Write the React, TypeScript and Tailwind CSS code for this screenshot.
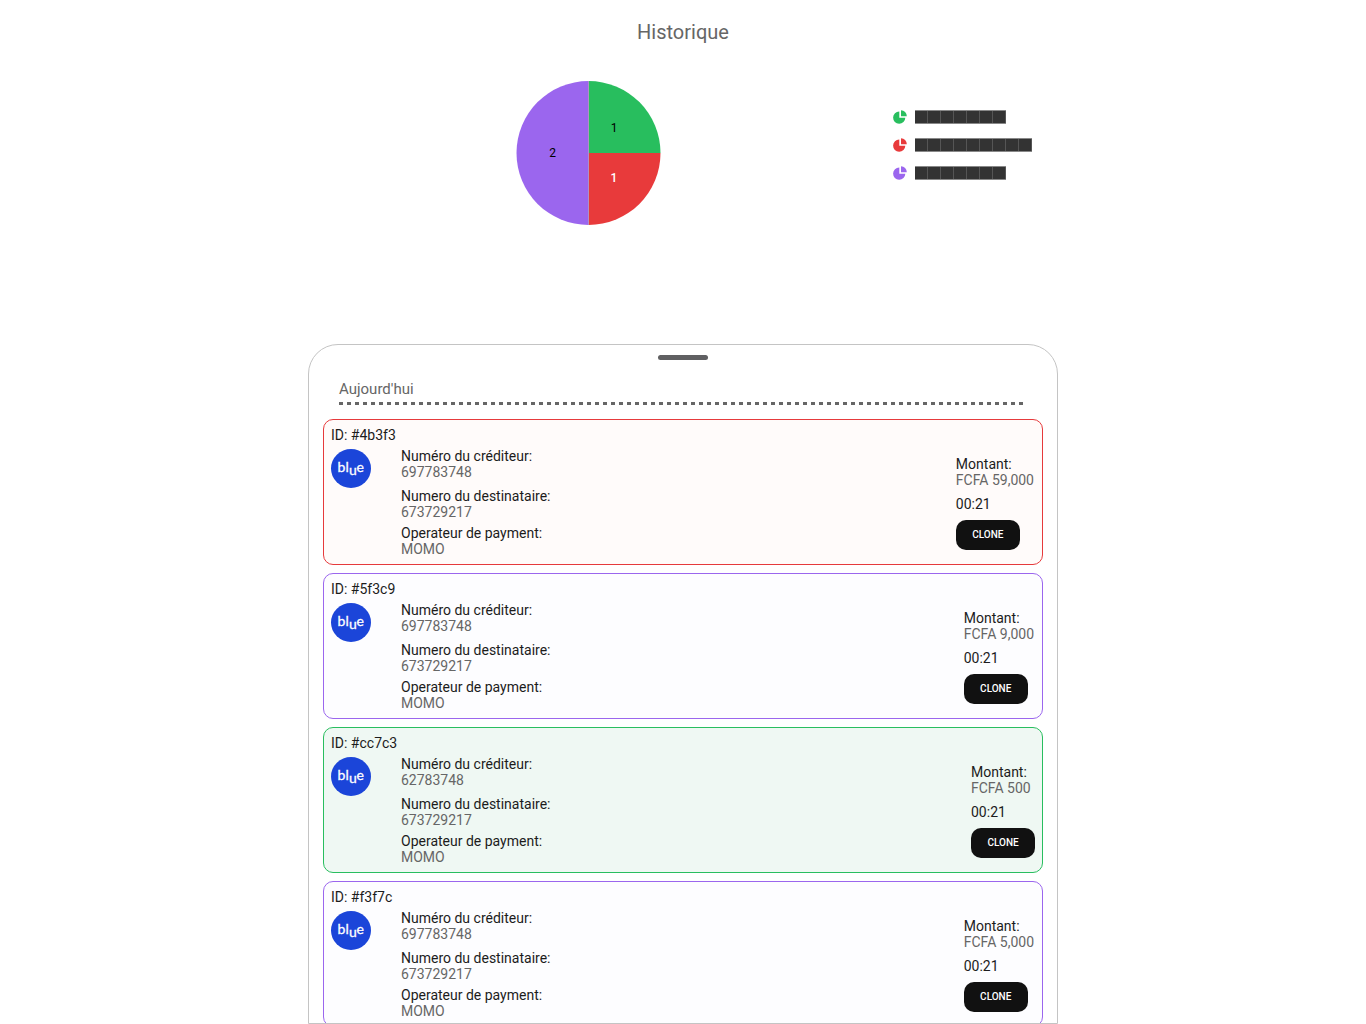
type Transaction = {
  id: string;
  creditor: string;
  amount: string;
  tone: string;
};

const transactions: Transaction[] = [
  { id: "#4b3f3", creditor: "697783748", amount: "FCFA 59,000", tone: "border-[#e63a3c] bg-[#fffbfa]" },
  { id: "#5f3c9", creditor: "697783748", amount: "FCFA 9,000", tone: "border-[#9b66ee] bg-[#fdfdff]" },
  { id: "#cc7c3", creditor: "62783748", amount: "FCFA 500", tone: "border-[#29be5f] bg-[#eff8f3]" },
  { id: "#f3f7c", creditor: "697783748", amount: "FCFA 5,000", tone: "border-[#9b66ee] bg-[#fdfdff]" },
];

const legend = [
  { color: "text-[#28be5e]", blocks: 7 },
  { color: "text-[#e83a3b]", blocks: 9 },
  { color: "text-[#9b66ee]", blocks: 7 },
];

function BlueLogo() {
  return (
    <svg width="40" height="40" viewBox="0 0 40 40" role="img" aria-label="blue" className="shrink-0">
      <ellipse cx="20" cy="20.5" rx="20" ry="19.5" fill="#1b45d9" />
      <text fill="#fff" stroke="#fff" strokeWidth="0.3" fontFamily="Lato, sans-serif" fontSize="14">
        <tspan x="6.5" y="24">b</tspan>
        <tspan x="14.5" y="24">l</tspan>
        <tspan x="18" y="27">u</tspan>
        <tspan x="25.5" y="24">e</tspan>
      </text>
    </svg>
  );
}

function PieIcon({ className }: { className: string }) {
  return (
    <svg width="14" height="14" viewBox="0 0 14 14" fill="currentColor" aria-hidden="true" className={className}>
      <path d="M6.3 1.6V7.8H12.3A6.1 6.1 0 1 1 6.3 1.6Z" />
      <path d="M8 0.2A5.9 5.9 0 0 1 13.8 6.2H8Z" />
    </svg>
  );
}

function Pie() {
  return (
    <svg width="146" height="146" viewBox="0 0 146 146" role="img" aria-label="Répartition" className="ml-[207px]">
      <path d="M73.5 73V1A72 72 0 0 1 145.5 73Z" fill="#28be5e" />
      <path d="M73.5 73H145.5A72 72 0 0 1 73.5 145Z" fill="#e83a3b" />
      <path d="M73.5 73V145A72 72 0 0 1 73.5 1Z" fill="#9b66ee" />
      <path d="M73.5 1V145" stroke="#b08fc8" strokeWidth="1" />
      <g fontSize="12" fontFamily="Roboto, sans-serif" textAnchor="middle">
        <text x="99" y="52" fill="#000">1</text>
        <text x="99" y="102" fill="#fff" fontWeight="500">1</text>
        <text x="37.5" y="77" fill="#000">2</text>
      </g>
    </svg>
  );
}

function Field({ label, value }: { label: string; value: string }) {
  return (
    <div>
      <dt>{label}</dt>
      <dd className="text-[#666]">{value}</dd>
    </div>
  );
}

function Card({ item }: { item: Transaction }) {
  return (
    <li className={`shrink-0 rounded-[10px] border p-[7px] text-sm leading-4 text-[#1c1c1c] ${item.tone}`}>
      <h3>ID: {item.id}</h3>
      <div className="mt-[5px] flex items-start">
        <BlueLogo />
        <dl className="ml-[30px] flex-1">
          <Field label="Numéro du créditeur:" value={item.creditor} />
          <div className="mt-2 mb-[5px]">
            <Field label="Numero du destinataire:" value="673729217" />
          </div>
          <Field label="Operateur de payment:" value="MOMO" />
        </dl>
        <div className="mt-2">
          <dl className="pr-px">
            <Field label="Montant:" value={item.amount} />
          </dl>
          <p className="my-2">00:21</p>
          <button type="button" className="block h-[30px] w-16 rounded-[10px] bg-[#111] text-[10px] font-medium text-white">
            CLONE
          </button>
        </div>
      </div>
    </li>
  );
}

export default function App() {
  return (
    <main className="flex h-screen flex-col items-center overflow-hidden bg-white font-['Roboto',sans-serif]">
      <h1 className="mt-5 text-xl leading-6 text-[#666]">Historique</h1>
      <section className="mt-9 flex w-full max-w-[750px] items-start justify-between">
        <Pie />
        <ul className="mt-[23px] mr-[25px] flex w-[140px] flex-col">
          {legend.map((row) => (
            <li key={row.color} className="flex h-7 items-center gap-2">
              <PieIcon className={row.color} />
              <span className="flex border-y border-[#888]">
                {Array.from({ length: row.blocks }, (_, i) => (
                  <span key={i} className="h-3 w-[13px] border-r border-[#555] bg-[#333]" />
                ))}
              </span>
            </li>
          ))}
        </ul>
      </section>
      <section className="mt-[118px] flex min-h-0 w-full max-w-[750px] flex-1 flex-col overflow-hidden rounded-t-[30px] border border-[#c4c4c4] px-[14px] pt-[10px]">
        <div className="h-[5px] w-[50px] shrink-0 self-center rounded-full bg-[#606062]" />
        <h2 className="mx-4 mt-5 text-[15px] leading-[18px] text-[#666]">Aujourd'hui</h2>
        <div className="mx-4 mt-1 h-[3px] shrink-0 bg-[repeating-linear-gradient(90deg,#666_0_4px,transparent_4px_8px)]" />
        <ul className="mt-[14px] flex flex-col gap-2">
          {transactions.map((item) => (
            <Card key={item.id} item={item} />
          ))}
        </ul>
      </section>
    </main>
  );
}
